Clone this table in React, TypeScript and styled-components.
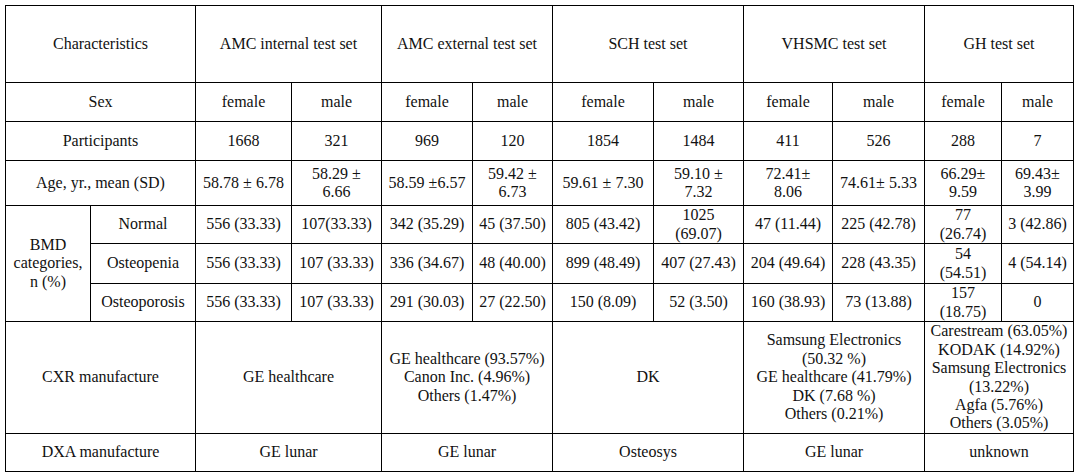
import React, { ReactElement } from 'react'
import styled, { createGlobalStyle } from 'styled-components'

const GlobalStyle = createGlobalStyle`
  html, body {
    margin: 0;
    padding: 0;
    background: #fff;
  }
`

const Page = styled.div`
  padding: 5px;
  background: #fff;
`

const Grid = styled.div`
  display: inline-grid;
  grid-template-columns: 84px 104px 95px 89px 90px 79px 100px 89px 88px 91px 76px 71px;
  grid-template-rows: 76px 38px 38px 44px 37px 39px 37px 111px 37px;
  gap: 1px;
  border: 1px solid #000;
  background: #000;
  font-family: 'Liberation Serif', 'Times New Roman', serif;
  font-size: 16px;
  line-height: 18.4px;
  color: #111;
`

const Cell = styled.div<{ $span?: number, $rows?: number }>`
  grid-column: span ${props => props.$span ?? 1};
  grid-row: span ${props => props.$rows ?? 1};
  display: flex;
  align-items: center;
  justify-content: center;
  text-align: center;
  white-space: pre;
  overflow: hidden;
  background: #fff;
`

const sets = ['AMC internal test set', 'AMC external test set', 'SCH test set', 'VHSMC test set', 'GH test set']

const participants = ['1668', '321', '969', '120', '1854', '1484', '411', '526', '288', '7']

const ages = [
  '58.78 ± 6.78', '58.29 ±\n6.66',
  '58.59 ±6.57', '59.42 ±\n6.73',
  '59.61 ± 7.30', '59.10 ±\n7.32',
  '72.41±\n8.06', '74.61± 5.33',
  '66.29±\n9.59', '69.43±\n3.99'
]

const bmd: Array<[string, string[]]> = [
  ['Normal', ['556 (33.33)', '107(33.33)', '342 (35.29)', '45 (37.50)', '805 (43.42)', '1025\n(69.07)', '47 (11.44)', '225 (42.78)', '77\n(26.74)', '3 (42.86)']],
  ['Osteopenia', ['556 (33.33)', '107 (33.33)', '336 (34.67)', '48 (40.00)', '899 (48.49)', '407 (27.43)', '204 (49.64)', '228 (43.35)', '54\n(54.51)', '4 (54.14)']],
  ['Osteoporosis', ['556 (33.33)', '107 (33.33)', '291 (30.03)', '27 (22.50)', '150 (8.09)', '52 (3.50)', '160 (38.93)', '73 (13.88)', '157\n(18.75)', '0']]
]

const cxr = [
  'GE healthcare',
  'GE healthcare (93.57%)\nCanon Inc. (4.96%)\nOthers (1.47%)',
  'DK',
  'Samsung Electronics\n(50.32 %)\nGE healthcare (41.79%)\nDK (7.68 %)\nOthers (0.21%)',
  'Carestream (63.05%)\nKODAK (14.92%)\nSamsung Electronics\n(13.22%)\nAgfa (5.76%)\nOthers (3.05%)'
]

const dxa = ['GE lunar', 'GE lunar', 'Osteosys', 'GE lunar', 'unknown']

const sexes = sets.flatMap(() => ['female', 'male'])

export default function App (): ReactElement {
  return (
    <Page>
      <GlobalStyle />
      <Grid>
        <Cell $span={2}>Characteristics</Cell>
        {sets.map(s => <Cell key={s} $span={2}>{s}</Cell>)}

        <Cell $span={2}>Sex</Cell>
        {sexes.map((s, i) => <Cell key={`sex${i}`}>{s}</Cell>)}

        <Cell $span={2}>Participants</Cell>
        {participants.map((p, i) => <Cell key={`p${i}`}>{p}</Cell>)}

        <Cell $span={2}>Age, yr., mean (SD)</Cell>
        {ages.map((a, i) => <Cell key={`a${i}`}>{a}</Cell>)}

        <Cell $rows={3}>{'BMD\ncategories,\nn (%)'}</Cell>
        {bmd.map(([label, values]) => (
          <React.Fragment key={label}>
            <Cell>{label}</Cell>
            {values.map((v, i) => <Cell key={`${label}${i}`}>{v}</Cell>)}
          </React.Fragment>
        ))}

        <Cell $span={2}>CXR manufacture</Cell>
        {cxr.map((c, i) => <Cell key={`c${i}`} $span={2}>{c}</Cell>)}

        <Cell $span={2}>DXA manufacture</Cell>
        {dxa.map((d, i) => <Cell key={`d${i}`} $span={2}>{d}</Cell>)}
      </Grid>
    </Page>
  )
}
